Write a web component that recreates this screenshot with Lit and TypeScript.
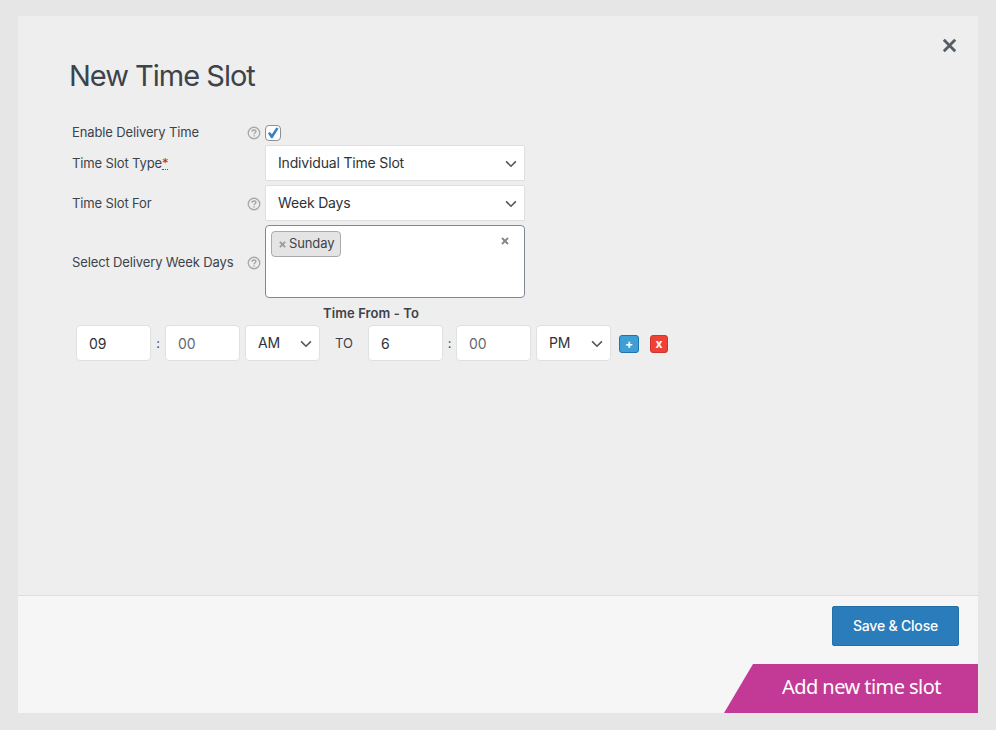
import { LitElement, html, css, svg } from "lit";
import { customElement, property } from "lit/decorators.js";

const chevron = html`<svg class="chev" viewBox="0 0 12 8" width="12" height="8">
  <path d="M1.1 1.4 6 6.2 10.9 1.4" fill="none" stroke="#555" stroke-width="1.6" /></svg>`;

const cross = (size: number, color: string, width: number) => html`<svg
  viewBox="0 0 10 10" width=${size} height=${size}>
  ${svg`<path d="M1.2 1.2 8.8 8.8M8.8 1.2 1.2 8.8" fill="none" stroke=${color} stroke-width=${width} />`}</svg>`;

const help = html`<svg viewBox="0 0 14 14" width="14" height="14" fill="none" stroke="#a5a7a9">
  <circle cx="7" cy="7" r="5.75" stroke-width="1.3" />
  <path d="M5.1 5.7C5.1 4.6 5.9 4 7 4s1.9.6 1.9 1.6C8.9 6.8 7.1 6.8 7.1 8.3" stroke-width="1.4" />
  <path d="M7.1 9.2v1.4" stroke-width="1.5" /></svg>`;

@customElement("form-row")
class FormRow extends LitElement {
  @property() label = "";
  @property({ type: Boolean }) required = false;
  @property({ type: Boolean }) tip = false;

  static styles = css`
    :host { display: grid; grid-template-columns: 175px 18px 260px; align-items: center; }
    .label { font-size: 13px; line-height: 18px; letter-spacing: -0.13px; white-space: nowrap; }
    .req { color: #b32d2e; border-bottom: 1px dotted #b32d2e; letter-spacing: 0; display: inline-block; line-height: 14px; height: 13px; }
    .tip { height: 14px; margin-top: 2px; }
    .tip svg { display: block; }
  `;

  render() {
    return html`<span class="label">${this.label}${this.required ? html`<span class="req">*</span>` : ""}</span>
      <span class="tip">${this.tip ? help : ""}</span><slot></slot>`;
  }
}

@customElement("app-root")
class AppRoot extends LitElement {
  static styles = css`
    :host { display: block; width: 996px; height: 730px; box-sizing: border-box; padding: 16px 18px 17px; background: #e6e6e6; font-family: Inter, "Liberation Sans", sans-serif; color: #3c434a; overflow: hidden; }
    * { box-sizing: border-box; }
    .panel { height: 697px; display: flex; flex-direction: column; }
    .body { position: relative; height: 579px; background: #eee; padding: 40px 0 0 54px; }
    .close { position: absolute; right: 21px; top: 22px; width: 15px; height: 15px; }
    .close svg, .clear svg, .tag svg { display: block; }
    h1 { margin: 0 0 0 -3px; font-size: 29px; line-height: 40px; font-weight: 400; letter-spacing: -1px; white-space: nowrap; }
    .form { margin-top: 26px; display: flex; flex-direction: column; gap: 4px; }
    .first { height: 19px; }
    .check { width: 16px; height: 16px; border: 1px solid #8c8f94; border-radius: 4px; background: #fff; margin: 3px 0 0; }
    .check svg { display: block; }
    .select { display: flex; align-items: center; justify-content: space-between; height: 36px; border: 1px solid #dfdfdf; background: #fff; padding: 0 7px 1px 12px; font-size: 14px; letter-spacing: -0.17px; color: #2c3338; border-radius: 1px; }
    .chev { display: block; margin-top: 2px; }
    .multi { height: 73px; background: #fff; border: 1px solid #7e8993; border-radius: 4px; padding: 5px; display: flex; justify-content: space-between; align-items: flex-start; }
    .tag { height: 26px; width: 70px; border: 1px solid #aaa; border-radius: 4px; background: #e4e4e4; font-size: 13px; line-height: 22px; padding: 0 0 2px 7px; display: flex; align-items: center; gap: 3px; white-space: nowrap; letter-spacing: -0.13px; }
    .tag svg { margin-top: 3px; }
    .clear { margin: 6px 10px 0 0; }
    h2 { margin: 6px 0 0 251px; font-size: 13px; line-height: 19px; font-weight: 600; letter-spacing: 0.1px; }
    .times { display: flex; align-items: center; margin: 2px 0 0 4px; height: 36px; font-size: 14px; }
    .box { width: 75px; height: 36px; border: 1px solid #e0e0e0; border-radius: 4px; background: #fff; color: #2c3338; padding: 1px 7px 0 12px; display: flex; align-items: center; justify-content: space-between; }
    .box.pm { padding: 0 7px 1px 12px; letter-spacing: -0.2px; }
    .hint { color: #646970; }
    .colon { width: 14px; text-align: center; font-size: 13px; }
    .to ~ .colon { width: 13px; }
    .gap { margin-left: 5px; }
    .to { width: 48px; text-align: center; font-size: 13px; }
    .btn { width: 20px; height: 18px; margin: 2px 0 0 8px; border-radius: 3px; border: 1px solid #2271b1; background: #3d9fd5; color: #fff; font-size: 12px; font-weight: 700; line-height: 15px; text-align: center; }
    .del { width: 18px; margin-left: 11px; background: #ef4135; border-color: #c9372d; }
    .foot { height: 118px; border-top: 1px solid #dedede; background: #f6f6f6; display: flex; flex-direction: column; align-items: flex-end; justify-content: space-between; padding-top: 10px; }
    .save { width: 127px; height: 40px; margin-right: 19px; background: #2b7cbb; border: 1px solid #236fa8; border-radius: 2px; color: #fff; font-size: 14px; font-weight: 500; line-height: 38px; text-align: center; letter-spacing: -0.2px; white-space: nowrap; }
    .ribbon { width: 254px; height: 49px; background: #c23a95; clip-path: polygon(29px 0, 100% 0, 100% 100%, 0 100%); color: #fff; font-family: "Noto Sans", sans-serif; font-size: 20px; line-height: 46px; padding-left: 58px; letter-spacing: -0.56px; white-space: nowrap; }
  `;

  private box(text: string, kind: "value" | "hint" | "select") {
    return kind === "select"
      ? html`<div class="box pm gap"><span>${text}</span>${chevron}</div>`
      : html`<div class="box"><span class=${kind}>${text}</span></div>`;
  }

  private time(hour: string, half: string) {
    return html`${this.box(hour, "value")}<span class="colon">:</span>${this.box("00", "hint")}${this.box(half, "select")}`;
  }

  render() {
    return html`<div class="panel">
      <div class="body">
        <div class="close">${cross(15, "#555d66", 1.9)}</div>
        <h1>New Time Slot</h1>
        <div class="form">
          <form-row class="first" label="Enable Delivery Time" tip>
            <div class="check"><svg viewBox="0 0 14 14" width="14" height="14"><path d="M1.9 7.3 3.9 6 5.9 8.3 10.3 1.6 12.5 2.5 6.5 12.3 5.1 12.3Z" fill="#3582c4" /></svg></div>
          </form-row>
          <form-row label="Time Slot Type" required><div class="select"><span>Individual Time Slot</span>${chevron}</div></form-row>
          <form-row label="Time Slot For" tip><div class="select"><span>Week Days</span>${chevron}</div></form-row>
          <form-row label="Select Delivery Week Days" tip>
            <div class="multi"><span class="tag">${cross(7, "#999", 2.4)}Sunday</span><span class="clear">${cross(8, "#888", 2.4)}</span></div>
          </form-row>
        </div>
        <h2>Time From - To</h2>
        <div class="times">
          ${this.time("09", "AM")}<span class="to">TO</span>${this.time("6", "PM")}
          <span class="btn">+</span><span class="btn del">x</span>
        </div>
      </div>
      <div class="foot">
        <div class="save">Save &amp; Close</div>
        <div class="ribbon">Add new time slot</div>
      </div>
    </div>`;
  }
}
